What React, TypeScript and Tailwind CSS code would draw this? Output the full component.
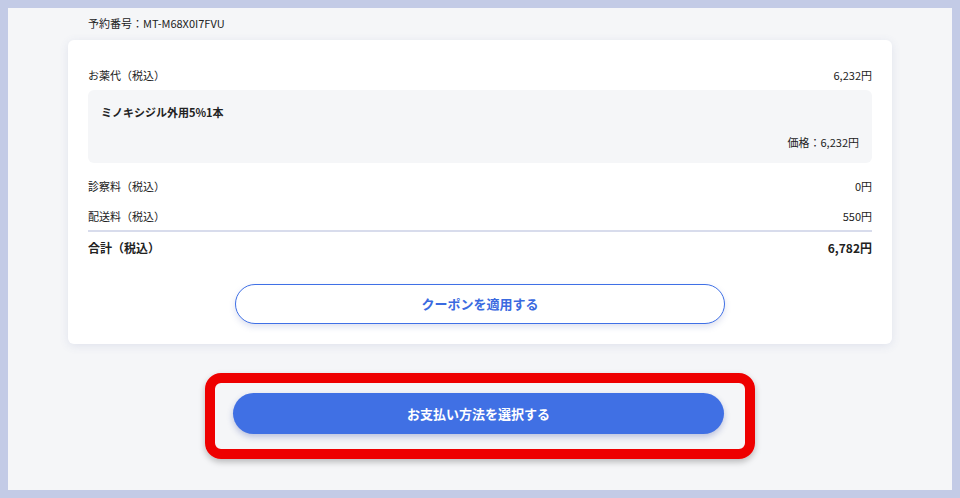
import React from "react";

const font = { fontFamily: '"Noto Sans CJK JP", "Noto Sans", sans-serif' };

export default function App() {
  return (
    <div className="w-[960px] h-[498px] bg-[#c3cbe6] p-2" style={font}>
      <div className="h-full w-full bg-[#f5f6f8] overflow-hidden flex flex-col items-center">
        <div className="w-[824px]">
          <div className="pl-5 pt-[7px] h-[32px] text-[11px] leading-[16px] text-[#222]">予約番号：MT-M68X0I7FVU</div>
          <div className="bg-white rounded-[6px] shadow-[0_2px_10px_rgba(70,90,160,0.12)] px-5 pt-[27px] pb-5 text-[#222]">
            <div className="flex justify-between text-[11px] leading-[16px]">
              <span>お薬代（税込）</span>
              <span>6,232円</span>
            </div>
            <div className="mt-[7px] h-[73px] bg-[#f5f6f8] rounded-[6px] px-[13px] pt-[14px] pb-[13px] flex flex-col justify-between">
              <div className="text-[11px] leading-[16px] font-bold">ミノキシジル外用5%1本</div>
              <div className="text-[11px] leading-[16px] text-right">価格：6,232円</div>
            </div>
            <div className="mt-[15px] flex justify-between text-[11px] leading-[16px]">
              <span>診察料（税込）</span>
              <span>0円</span>
            </div>
            <div className="mt-[14px] flex justify-between text-[11px] leading-[16px]">
              <span>配送料（税込）</span>
              <span>550円</span>
            </div>
            <div className="mt-[6px] h-[2px] bg-[#d8dcec]"></div>
            <div className="mt-[7px] flex justify-between text-[12px] leading-[18px] font-bold">
              <span>合計（税込）</span>
              <span>6,782円</span>
            </div>
            <div className="mt-[27px] flex justify-center">
              <button className="w-[490px] h-[40px] rounded-full border border-[#3f70e6] bg-white text-[#3a6ae0] text-[13px] font-bold shadow-[0_3px_6px_rgba(70,90,170,0.18)]">
                クーポンを適用する
              </button>
            </div>
          </div>
        </div>
        <div className="mt-[29px] w-[550px] h-[86px] border-[10px] border-[#ee0000] rounded-[16px] pl-[18px] pr-[21px] pt-[10px] shadow-[0_3px_6px_rgba(0,0,0,0.25)]">
          <button className="w-full h-[41px] rounded-full bg-[#4070e4] text-white text-[13px] font-bold shadow-[0_3px_6px_rgba(50,70,160,0.3)]">
            お支払い方法を選択する
          </button>
        </div>
      </div>
    </div>
  );
}
